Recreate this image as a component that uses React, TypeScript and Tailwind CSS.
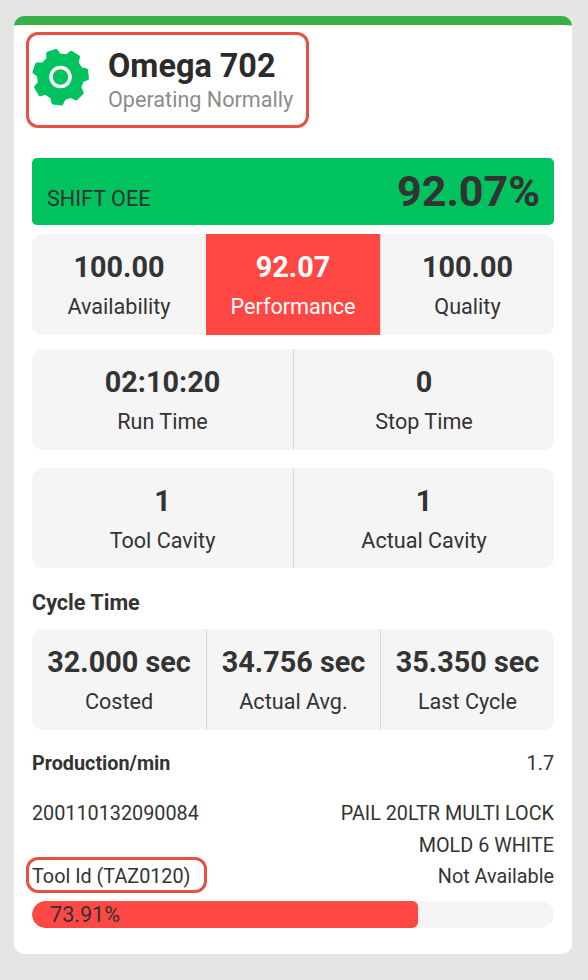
import React from "react";

// gear outline, built from teeth around the centre
const gearPath = (() => {
  const teeth = 7;
  const out = 27;
  const inner = 22;
  const start = -6;
  const pts: string[] = [];
  for (let i = 0; i < teeth; i++) {
    const a = start + (i * 360) / teeth;
    const step = 360 / teeth;
    const list: [number, number][] = [
      [a - step * 0.32, inner],
      [a - step * 0.18, out],
      [a + step * 0.18, out],
      [a + step * 0.32, inner],
    ];
    list.forEach(([deg, r]) => {
      const rad = (deg * Math.PI) / 180;
      pts.push(`${(28.5 + r * Math.cos(rad)).toFixed(2)} ${(29 + r * Math.sin(rad)).toFixed(2)}`);
    });
  }
  return "M" + pts.join("L") + "Z";
})();

const Gear = () => (
  <svg width="58" height="58" viewBox="0 0 58 58" className="shrink-0 mb-[7px]">
    <path d={gearPath} fill="#00c25f" stroke="#00c25f" strokeWidth="3" strokeLinejoin="round" />
    <circle cx="28.5" cy="29" r="9.5" fill="none" stroke="#ffffff" strokeWidth="3.6" />
  </svg>
);

interface CellProps {
  value: string;
  label: string;
  highlight?: boolean;
  divider?: boolean;
}

const Cell: React.FC<CellProps> = ({ value, label, highlight, divider }) => (
  <div
    className={
      "flex flex-col items-center pt-[15px] " +
      (highlight ? "bg-[#ff4843] text-white " : "text-[#333333] ") +
      (divider ? "border-l border-[#d9d9d9]" : "")
    }
  >
    <div className="text-[28.8px] leading-[36px] font-bold whitespace-nowrap">{value}</div>
    <div className="text-[21.6px] leading-[28px] mt-[8px] whitespace-nowrap">{label}</div>
  </div>
);

export default function App() {
  return (
    <div className="min-h-[980px] bg-[#e5e5e3] pl-[14px] pr-[16px] pt-[16px] font-['Roboto',sans-serif] text-[#333333]">
      <div className="h-[938px] bg-white rounded-[10px] border-t-[9px] border-[#37b04a] px-[18px] overflow-hidden">
        {/* Header */}
        <div className="relative flex items-center h-[96px] mt-[7px] -mx-[6px] px-[6px] w-[283px]">
          <div className="absolute inset-0 border-[3px] border-[#e8503f] rounded-[12px]" />
          <Gear />
          <div className="ml-[18px]">
            <div className="text-[32.4px] leading-[40px] font-bold text-[#2b2b2b] whitespace-nowrap">Omega 702</div>
            <div className="text-[21.6px] leading-[28px] text-[#8c8c8c] whitespace-nowrap">Operating Normally</div>
          </div>
        </div>

        {/* OEE */}
        <div className="mt-[30px] h-[67px] bg-[#00c25f] rounded-[5px] flex items-end justify-between pl-[15px] pr-[14px]">
          <div className="text-[21.6px] leading-[28px] pb-[12px]">SHIFT OEE</div>
          <div className="text-[43px] leading-[56px] font-bold pb-[6px]">92.07%</div>
        </div>

        <div className="mt-[9px] h-[101px] bg-[#f5f5f5] rounded-[10px] grid grid-cols-3 overflow-hidden">
          <Cell value="100.00" label="Availability" />
          <Cell value="92.07" label="Performance" highlight />
          <Cell value="100.00" label="Quality" divider />
        </div>

        <div className="mt-[14px] h-[101px] bg-[#f5f5f5] rounded-[10px] grid grid-cols-2 overflow-hidden">
          <Cell value="02:10:20" label="Run Time" />
          <Cell value="0" label="Stop Time" divider />
        </div>

        <div className="mt-[18px] h-[100px] bg-[#f5f5f5] rounded-[10px] grid grid-cols-2 overflow-hidden">
          <Cell value="1" label="Tool Cavity" />
          <Cell value="1" label="Actual Cavity" divider />
        </div>

        <div className="mt-[21px] text-[21.6px] leading-[28px] font-bold">Cycle Time</div>

        <div className="mt-[12px] h-[101px] bg-[#f5f5f5] rounded-[10px] grid grid-cols-3 overflow-hidden">
          <Cell value="32.000 sec" label="Costed" />
          <Cell value="34.756 sec" label="Actual Avg." divider />
          <Cell value="35.350 sec" label="Last Cycle" divider />
        </div>

        {/* Details */}
        <div className="mt-[20px] flex justify-between text-[19.8px] leading-[28px]">
          <div className="font-bold">Production/min</div>
          <div>1.7</div>
        </div>
        <div className="mt-[20px] flex justify-between text-[19.8px] leading-[31.5px]">
          <div>200110132090084</div>
          <div className="text-right w-[260px]">PAIL 20LTR MULTI LOCK MOLD 6 WHITE</div>
        </div>
        <div className="flex justify-between items-center text-[19.8px] leading-[31.5px]">
          <div className="relative whitespace-nowrap">
            Tool Id (TAZ0120)
            <div className="absolute -left-[6px] -right-[16px] -top-[4px] h-[36px] border-[3px] border-[#e8503f] rounded-[12px]" />
          </div>
          <div>Not Available</div>
        </div>

        {/* Progress */}
        <div className="mt-[8px] h-[27px] bg-[#f5f5f5] rounded-[14px] overflow-hidden">
          <div className="h-full w-[386px] bg-[#ff4843] rounded-l-[14px] rounded-r-[6px] pl-[18px] text-[21.6px] leading-[27px] text-[#333333]">
            73.91%
          </div>
        </div>
      </div>
    </div>
  );
}
